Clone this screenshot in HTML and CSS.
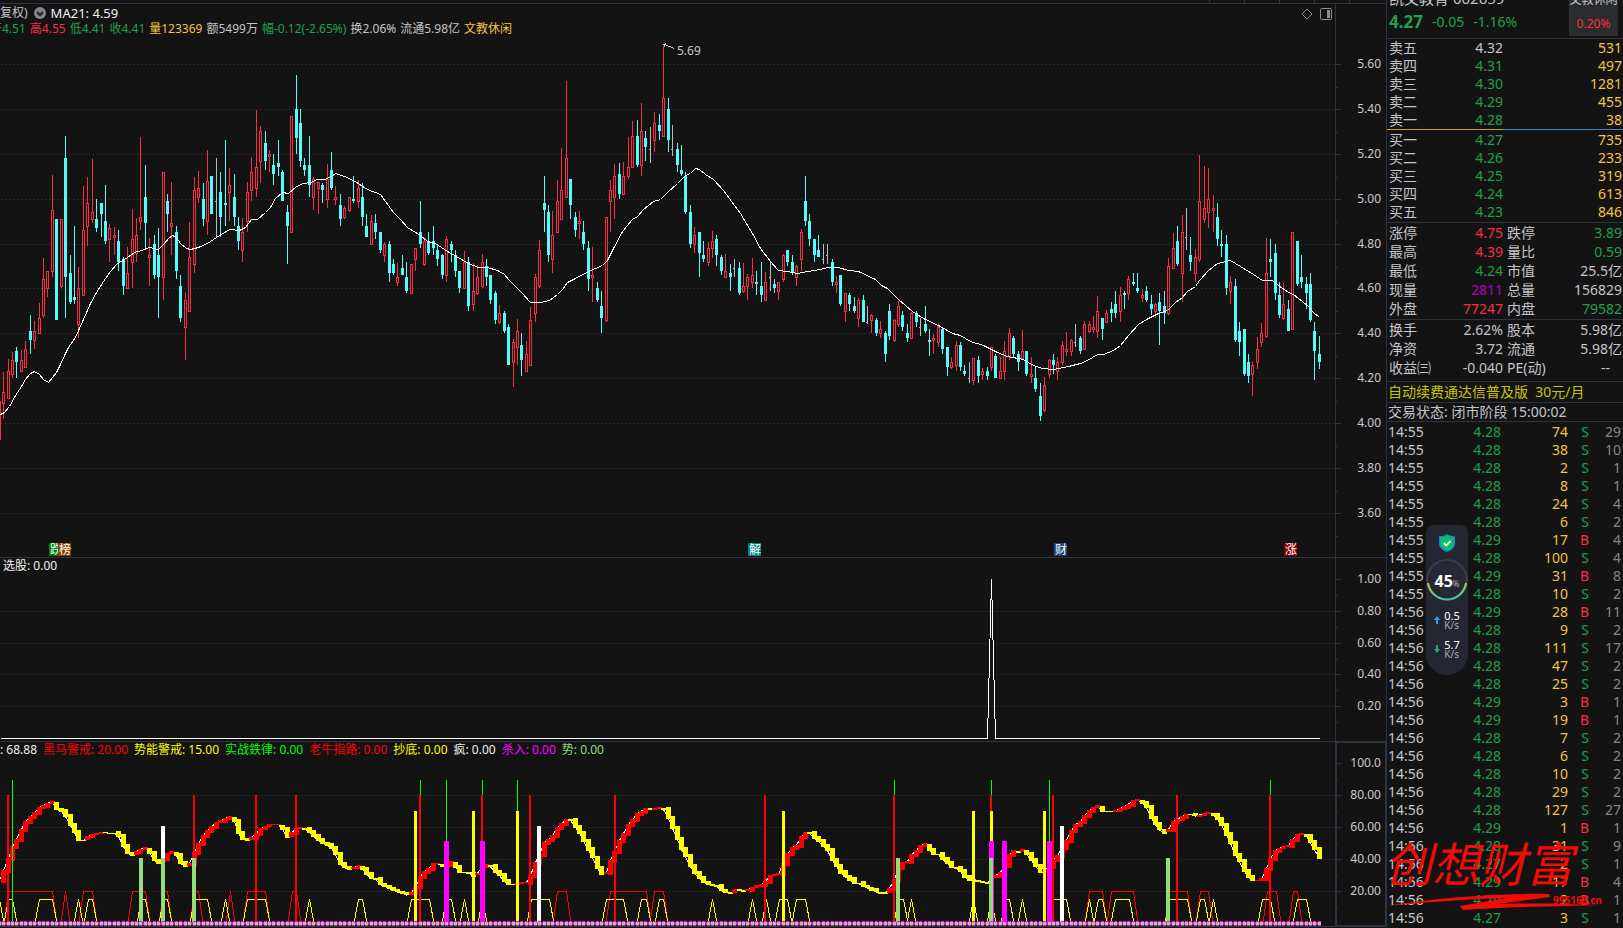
FILE: index.html
```html
<!DOCTYPE html>
<html lang="zh-CN">
<head>
<meta charset="utf-8">
<title>凯文教育 002659</title>
<link rel="stylesheet" href="styles.css">
</head>
<body>
<div class="app">
  <main class="charts">
    <div class="strip"><i></i><i></i><i></i><i></i><i></i></div>

    <section class="panel panel-price">
      <div class="plot">
        <svg class="canvas" id="price"></svg>
        <div class="legend legend-top">
          <span class="adjust">复权)</span>
          <button class="round" type="button" aria-label="指标菜单"><svg viewBox="0 0 12 12"><circle cx="6" cy="6" r="6"/><path d="M3 5l3 3 3-3"/></svg></button>
          <span class="bright">MA21: 4.59</span>
        </div>
        <div class="legend legend-quote">
          <span class="down">开4.51</span><span class="up">高4.55</span><span class="down">低4.41</span><span class="down">收4.41</span><span class="amber">量123369</span><span>额5499万</span><span class="down">幅-0.12(-2.65%)</span><span>换2.06%</span><span>流通5.98亿</span><span class="amber">文教休闲</span>
        </div>
        <div class="tools">
          <button type="button" aria-label="标记"><svg viewBox="0 0 12 12"><path d="M6 1l5 5-5 5-5-5z"/></svg></button>
          <button type="button" aria-label="侧栏"><svg viewBox="0 0 12 12"><rect x=".5" y=".5" width="11" height="11" rx="1"/><path class="solid" d="M7 2h3v8H7z"/></svg></button>
        </div>
      </div>
      <div class="axis"><svg class="canvas" id="price-axis"></svg></div>
    </section>

    <section class="panel panel-pick">
      <div class="plot">
        <svg class="canvas" id="pick"></svg>
        <div class="legend legend-pick"><span class="bright">选股: 0.00</span></div>
      </div>
      <div class="axis"><svg class="canvas" id="pick-axis"></svg></div>
    </section>

    <section class="panel panel-wave">
      <div class="plot">
        <svg class="canvas" id="wave"></svg>
        <div class="legend legend-wave">
          <span class="bright">: 68.88</span><span class="pure-red">黑马警戒: 20.00</span><span class="pure-yellow">势能警戒: 15.00</span><span class="pure-green">实战鉄律: 0.00</span><span class="pure-red">老牛指路: 0.00</span><span class="pure-yellow">抄底: 0.00</span><span class="bright">疯: 0.00</span><span class="magenta">杀入: 0.00</span><span class="leaf">势: 0.00</span>
        </div>
      </div>
      <div class="axis axis-boxed"><svg class="canvas" id="wave-axis"></svg></div>
    </section>
  </main>

  <aside class="side">
    <header class="quote">
      <div class="quote-main">
        <h1>凯文教育 002659</h1>
        <p class="down"><strong>4.27</strong><span>-0.05</span><span>-1.16%</span></p>
      </div>
      <div class="sector"><span>文教休闲</span><b>0.20%</b></div>
    </header>

    <table class="book asks"><tbody>
      <tr><th>卖五</th><td>4.32</td><td>531</td></tr>
      <tr><th>卖四</th><td class="down">4.31</td><td>497</td></tr>
      <tr><th>卖三</th><td class="down">4.30</td><td>1281</td></tr>
      <tr><th>卖二</th><td class="down">4.29</td><td>455</td></tr>
      <tr><th>卖一</th><td class="down">4.28</td><td>38</td></tr>
    </tbody></table>
    <div class="balance"></div>
    <table class="book bids"><tbody>
      <tr><th>买一</th><td class="down">4.27</td><td>735</td></tr>
      <tr><th>买二</th><td class="down">4.26</td><td>233</td></tr>
      <tr><th>买三</th><td class="down">4.25</td><td>319</td></tr>
      <tr><th>买四</th><td class="down">4.24</td><td>613</td></tr>
      <tr><th>买五</th><td class="down">4.23</td><td>846</td></tr>
    </tbody></table>

    <table class="facts"><tbody>
      <tr><th>涨停</th><td class="up">4.75</td><th>跌停</th><td class="down">3.89</td></tr>
      <tr><th>最高</th><td class="up">4.39</td><th>量比</th><td class="down">0.59</td></tr>
      <tr><th>最低</th><td class="down">4.24</td><th>市值</th><td>25.5亿</td></tr>
      <tr><th>现量</th><td class="violet">2811</td><th>总量</th><td>156829</td></tr>
      <tr><th>外盘</th><td class="up">77247</td><th>内盘</th><td class="down">79582</td></tr>
    </tbody></table>
    <table class="facts facts-more"><tbody>
      <tr><th>换手</th><td>2.62%</td><th>股本</th><td>5.98亿</td></tr>
      <tr><th>净资</th><td>3.72</td><th>流通</th><td>5.98亿</td></tr>
      <tr><th>收益㈢</th><td>-0.040</td><th>PE(动)</th><td class="dash">--</td></tr>
    </tbody></table>
    <a class="renew" href="#">自动续费通达信普及版&nbsp; 30元/月</a>
    <p class="status">交易状态: 闭市阶段 15:00:02</p>
    <table class="ticks"><tbody id="ticks"></tbody></table>

    <div class="monitor">
      <svg class="shield" viewBox="0 0 16 18"><path d="M8 0c2 1.600 5 2.200 8 2.300v7.200c0 4-3.500 7-8 8.500-4.500-1.500-8-4.500-8-8.500V2.300C3 2.200 6 1.600 8 0z" fill="#2a7be0"/><path d="M8 1.500c2 1.200 4.300 1.800 6.600 2v6c0 3.200-2.700 5.600-6.600 7-3.900-1.400-6.600-3.800-6.600-7v-6c2.300-.2 4.600-.8 6.600-2z" fill="#06c25f"/><path d="M4.800 9l2.400 2.400 4.200-4.200" fill="none" stroke="#fff" stroke-width="1.800"/></svg>
      <div class="gauge">
        <svg viewBox="0 0 42 42"><defs><linearGradient id="arc" x1="0" y1="0" x2="0" y2="1"><stop offset="0" stop-color="#b6cf3c"/><stop offset="1" stop-color="#35c9b4"/></linearGradient></defs><circle cx="21" cy="21" r="20" fill="#262933" stroke="#3a3d48" stroke-width="2"/><path d="M2 24a19.200 19.200 0 0 0 38 0" fill="none" stroke="url(#arc)" stroke-width="2"/></svg>
        <span><b>45</b>%</span>
      </div>
      <div class="rate"><svg viewBox="0 0 6 8"><path d="M3 0l3 4H4v4H2V4H0z" fill="#1ba4ff"/></svg><span>0.5<small>K/s</small></span></div>
      <div class="rate"><svg viewBox="0 0 6 8"><path d="M3 8L0 4h2V0h2v4h2z" fill="#12b565"/></svg><span>5.7<small>K/s</small></span></div>
    </div>

    <div class="brand">
      <span class="brand-name">创想财富</span>
      <svg viewBox="0 0 220 20"><path d="M0 14C50 6 110 1 164 2L165 5 112 12C145 11 180 12 218 13 180 14 120 15 78 18L75 14 122 6C80 7 35 11 0 14z"/></svg>
      <span class="brand-site">995168.cn</span>
    </div>
  </aside>
</div>
<script src="chart.js"></script>
</body>
</html>
```
FILE: styles.css
```css
:root {
  --bg: #141314;
  --line: #2f323f;
  --text: #c3c5ca;
  --up: #fa2d45;
  --down: #1fa04c;
  --amber: #f5c244;
}
* { box-sizing: border-box; }
body {
  margin: 0;
  background: var(--bg);
  color: var(--text);
  font: 14px/18px "Noto Sans", "Noto Sans CJK SC", sans-serif;
  overflow: hidden;
}
button { padding: 0; border: 0; background: none; display: block; }
.app { display: grid; grid-template-columns: minmax(0, 1fr) 237px; height: 100vh; }
.up { color: var(--up); }
.down { color: var(--down); }
.amber { color: var(--amber); }
.bright { color: #f0f0f0; }
.violet { color: #b400bc; }
.pure-red { color: #f00; }
.pure-yellow { color: #ff0; }
.pure-green { color: #0f0; }
.magenta { color: #f0f; }
.leaf { color: #92de72; }

/* charts */
.charts { display: grid; grid-template-rows: 4px 554fr 184fr 186fr; min-width: 0; }
.strip { border-bottom: 1px solid var(--line); display: flex; justify-content: flex-end; gap: 34px; padding-right: 36px; }
.strip i { width: 1px; background: var(--line); }
.panel { display: grid; grid-template-columns: minmax(0, 1fr) 51px; border-bottom: 1px solid var(--line); min-height: 0; }
.panel-wave { margin-bottom: 1px; }
.plot { position: relative; overflow: hidden; }
.axis { position: relative; border-left: 1px solid var(--line); }
.axis-boxed { box-shadow: inset 0 0 0 1px var(--line); }
.canvas { position: absolute; inset: 0; width: 100%; height: 100%; display: block; font-size: 12px; shape-rendering: crispEdges; }
.legend { position: relative; display: flex; align-items: center; gap: 4px; height: 16px; font-size: 12px; line-height: 16px; white-space: nowrap; }
.legend-top { margin-top: 1px; gap: 5px; }
.legend-top .bright { font-size: 13px; }
.adjust { margin-right: 1px; }
.round svg { width: 12px; height: 12px; display: block; fill: #85868a; }
.round path { fill: none; stroke: #202020; stroke-width: 2; }
.legend-quote { margin-left: -10px; }
.legend-pick { margin: 0 3px; }
.legend-wave { gap: 6px; }
.tools { position: absolute; top: 4px; right: 3px; display: flex; gap: 7px; }
.tools svg { width: 12px; height: 12px; display: block; fill: none; stroke: #8a8b8e; }
.tools .solid { fill: #8a8b8e; stroke: none; }

/* side column */
.side { position: relative; border-left: 1px solid var(--line); overflow: hidden; }
.quote { display: flex; justify-content: space-between; height: 39px; padding: 0 5px 0 2px; border-bottom: 1px solid var(--line); }
.quote h1 { margin: -12px 0 0; font-size: 15px; line-height: 20px; font-weight: 400; white-space: nowrap; }
.quote p { display: flex; align-items: center; gap: 9px; margin: 4px 0 0; line-height: 20px; }
.quote strong { font-size: 17px; }
.sector { width: 49px; height: 36px; background: #2a2c2e; text-align: center; font-size: 12px; line-height: 16px; }
.sector span { display: block; margin-top: -8px; }
.sector b { display: block; margin-top: 8px; color: var(--up); font-weight: 400; }
table { border-collapse: collapse; table-layout: fixed; width: 100%; }
th, td { padding: 0; font-weight: 400; white-space: nowrap; }
th { text-align: left; }
td { text-align: right; }
.book tr { height: 18px; }
.book th { width: 48px; padding-left: 2px; }
.book td:nth-child(2) { width: 68px; }
.book td:last-child { color: var(--amber); padding-right: 1px; }
.balance { height: 1px; background: linear-gradient(90deg, #cf9a35 49%, #4283b8 49%); }
.bids { margin-top: 1px; }
.facts { border-top: 1px solid var(--line); }
.bids + .facts { margin-top: 1px; }
.facts tr { height: 19px; }
.facts th, .facts td { padding-top: 1px; }
.facts th { width: 48px; padding-left: 2px; }
.facts td:nth-child(2) { width: 68px; }
.facts th:nth-child(3) { padding-left: 4px; }
.facts td:last-child { padding-right: 1px; }
.facts td.dash { padding-right: 13px; }
.facts-more { margin-top: 1px; }
.renew { display: block; margin-top: 4px; padding-left: 1px; height: 21px; border-top: 1px solid var(--line); color: #c8c400; line-height: 20px; text-decoration: none; white-space: nowrap; }
.status { margin: 0; height: 20px; padding-left: 1px; border-top: 1px solid var(--line); border-bottom: 1px solid var(--line); white-space: nowrap; }
.ticks { margin-top: 1px; }
.ticks tr { height: 18px; }
.ticks td:nth-child(1) { width: 48px; padding-left: 1px; text-align: left; }
.ticks td:nth-child(2) { width: 66px; }
.ticks td:nth-child(3) { width: 67px; color: var(--amber); }
.ticks td:nth-child(4) { width: 26px; padding-right: 5px; }
.ticks td:nth-child(5) { color: #85868a; padding-right: 2px; }

/* floating monitor */
.monitor { position: absolute; left: 39px; top: 525px; width: 42px; height: 150px; padding-top: 9px; border-radius: 8px 8px 21px 21px; background: #242731; color: #fff; display: flex; flex-direction: column; align-items: center; }
.shield { width: 16px; height: 18px; }
.gauge { position: relative; width: 42px; height: 42px; margin-top: 7px; flex: none; }
.gauge svg { display: block; }
.gauge span { position: absolute; inset: 0; text-align: center; font-size: 8px; line-height: 44px; color: #b0b2b8; }
.gauge b { font-size: 16px; color: #fff; }
.rate { display: flex; align-items: center; gap: 4px; height: 20px; margin-top: 9px; font-size: 11px; line-height: 10px; }
.rate svg { width: 6px; height: 8px; }
.rate small { display: block; font-size: 10px; line-height: 9px; color: #a9abb2; }

/* overlaid brand mark */
.brand { position: absolute; left: -2px; top: 832px; width: 220px; color: #f50a05; }
.brand-name { display: block; font: italic 400 47px/60px "Noto Sans CJK SC", sans-serif; white-space: nowrap; }
.brand svg { display: block; width: 220px; height: 20px; fill: #f50a05; }
.brand-site { position: absolute; left: 168px; top: 62px; font: bold 10px/12px "Noto Sans", sans-serif; }
```
FILE: chart.js
```js
const NS = 'http://www.w3.org/2000/svg';
const STEP = 4.43;
const FIRST = 3.65;
const BASE_WIDTH = 1335;

const UP = '#fa2d45';
const DOWN = '#54fcfc';
const FLAT = '#b9bac8';
const BG = '#141314';

// Bars are kind + high, body top, body bottom, low (flat bars: high, close, low), in thirds of a unit.
const segments = [
  { shift: 750, bars: 'r366,426,462,507 r327,363,447,447 r306,330,375,384 c291,303,336,384 r300,330,366,366 r273,297,354,354 c195,243,270,312 r213,243,273,297 r159,204,252,252 r24,87,198,204 r63,63,117,141' },
  { shift: 0, bars: 'r525,630,815,830 c657,657,959,959 r657,657,861,865 c408,474,831,954 c765,819,906,912 c678,891,900,912 r801,864,974,1014 r558,690,887,887 r531,609,681,738 r477,636,660,669 c597,657,684,696 c609,609,642,711 c555,663,723,732 r672,684,720,786 r681,705,714,765 c690,723,786,813 c771,777,858,885 r741,819,867,867 r627,717,789,864 r654,705,762,786 r411,651,666,690 c495,591,669,747 r714,765,774,858 c705,732,825,837 c684,765,831,954 r516,516,834,900 c582,603,642,696 r546,669,681,765 c678,696,813,837 c825,858,954,966 r876,900,984,1080 r666,771,936,936 r531,570,795,819 r513,564,594,609 c549,597,657,678 r450,543,666,705 c528,528,642,642 g474,604,711 c516,576,651,711 c420,609,615,678 r504,555,579,663 c522,591,651,678 c651,678,723,750 r654,696,753,786 r546,576,666,696 r471,516,573,603 r330,501,567,591 r378,393,486,549 c393,429,483,510 r450,462,471,516 c462,495,522,555 c420,489,501,528 c510,516,603,603 c615,636,678,792 r348,348,699,699 c225,327,414,462 c327,369,483,501 c474,495,510,528 c408,495,555,591 r531,537,594,630 r546,546,567,642 c549,555,570,609 r492,537,600,624 c456,510,564,570 r558,591,600,615 c582,615,657,678 r618,624,654,657 r591,591,633,636 c528,597,603,609 r540,564,606,624 c549,591,651,678 c642,678,711,711 r645,663,735,735 c642,669,696,717 c696,696,750,759 r726,732,768,786 c723,732,819,846 c777,792,819,825 r789,831,849,858 c765,804,825,825 c786,831,873,879 r792,792,882,882 r744,744,780,813 c603,696,732,744' },
  { shift: 90, bars: 'r630,633,705,708 c606,633,669,675 c588,633,654,675 c642,660,687,708 c672,675,735,747 r618,627,738,756 c633,642,660,696 c660,675,723,741 c723,723,774,789 r663,696,777,777 c681,696,828,843 r699,783,825,843 r705,741,792,795 r672,696,771,774 c687,708,741,768 c735,735,810,822 c783,789,870,882 r825,849,879,882 c843,849,903,909 c882,891,1005,1005 r927,936,999,1071 r867,903,954,1005 c909,945,990,1038 r933,972,1026,1026 r831,870,1008,1008 r732,741,852,876 r630,660,771,774 c438,519,540,606 c525,546,675,696 r543,615,690,729 r450,513,609,609 r354,480,570,570 r153,384,504,504 c447,447,525,567 c546,561,600,621 r543,573,582,627 c573,606,642,660 c633,654,747,783 r651,735,744,816 c756,774,810,816 c783,828,864,909 r561,561,873,876 r450,480,516,606 r402,438,504,567 c399,432,492,507 r396,438,495,495 r321,411,441,447 r273,318,414,414 c270,318,405,411 r219,303,408,438 c303,324,351,393 g291,358,399 r246,279,333,366 c252,285,303,330 r48,204,321,321 c204,237,330,366 g285,358,378 c339,357,405,426 c345,420,432,438 c426,438,546,552 c525,546,642,654 r591,615,645,669 c606,606,669,741 c633,675,687,696 r636,654,699,708 r603,633,657,684 c615,627,675,708 c675,681,723,735 r672,723,744,744 c702,729,741,783 g687,715,741 c696,714,789,795 r699,768,786,789 r732,741,771,810 r684,735,759,774 c723,756,762,795 c696,768,795,816 r726,756,813,813 g696,741,783 c747,762,774,789 r756,756,786,810 r672,675,750,756 c660,660,696,708' },
  { shift: 510, bars: 'c255,276,309,315 r285,288,324,348 r177,186,270,303 c18,93,153,168 c132,153,207,228 c207,207,255,276 c195,240,261,261 g222,268,282 g222,256,282 c267,276,336,348 r318,336,345,369 c315,315,402,408 r369,369,426,456 c369,375,402,423 c381,408,423,429 r384,390,447,471 c375,390,456,456 g408,457,462 r432,435,453,489 c444,450,489,498 r453,477,492,504 c483,489,552,576 c402,423,498,510 r447,450,513,516 r393,408,465,471 c423,435,471,483 c462,489,504,516 r426,429,507,507 c423,429,456,471 g444,472,498 c408,462,483,489 c477,510,516,558 r492,504,513,552 r459,471,519,531 c471,477,537,552 c531,531,591,618 r561,576,594,597 r513,525,588,603 c516,525,591,603 c585,603,612,618 g576,625,639 r564,564,633,645 c558,570,618,639 r594,603,615,630 c591,603,618,630 r531,531,594,603 c552,558,624,624 r561,603,627,627 r513,543,606,630 r474,489,561,570 c498,504,552,564 c543,552,576,603 r480,543,567,570 c543,543,612,618 r561,612,621,639 c591,624,657,666 c639,678,738,753 r621,645,723,726 r567,570,615,624 c552,570,585,612 r561,576,606,630 r513,525,579,585 r486,537,546,558 r507,510,546,558 g462,517,531 c498,504,543,552 r453,462,540,540 r453,462,486,489 r438,471,480,489 r378,423,486,504 c444,444,477,510 r420,429,459,459 c396,417,429,456 c363,402,429,444 r351,375,426,456 c363,369,375,417 r318,327,372,390' },
  { shift: 420, bars: 'c399,426,432,438 c399,444,453,459 r447,465,474,486 c438,453,480,486 c465,492,507,525 r489,492,516,534 c459,486,513,615 c453,498,519,552 r354,378,522,525 r279,324,387,387 c258,303,372,378 r225,276,402,486 g204,292,330 c291,345,366,393 r327,351,402,426 r45,183,360,366 r78,204,240,249 r84,177,219,264 r165,204,213,276 c189,231,297,318 c270,312,318,351 c285,312,444,465 r408,426,456,492 c417,438,600,606 c546,573,606,648 c567,567,702,708 c642,666,708,729 r663,675,705,768 r591,627,669,687 r549,579,609,621 r294,399,591,594 c297,357,366,411 c312,339,459,480 c426,465,525,534 r429,492,537,540 c480,507,573,573 r276,276,570,570 c303,303,432,438 c345,411,426,444 c411,432,459,507 c399,432,540,546 c546,573,633,720 c588,642,666,687' }
];

const average = '0,414 4,412 9,406 15,395 21,386 25,379 30,373 34,371 39,374 43,379 48,382 52,377 56,372 60,364 65,353 68,347 75,337 83,319 90,303 96,292 103,281 110,271 116,264 119,262 127,257 134,252 141,250 149,247 158,249 164,243 168,238 172,235 176,237 180,243 186,248 190,249 198,247 207,243 216,237 229,229 239,230 245,227 251,219 257,219 265,212 270,207 275,198 282,192 288,193 296,186 303,183 310,182 317,179 324,179 331,176 335,173 344,176 353,180 367,189 380,194 393,212 400,219 407,227 420,235 427,241 435,243 447,251 463,260 468,263 478,267 487,267 497,270 504,274 508,279 513,284 522,293 530,302 540,302 549,300 557,294 562,289 567,282 573,279 588,271 602,265 607,260 613,248 622,231 632,219 637,216 643,209 653,201 660,199 667,192 677,183 685,175 690,173 695,168 699,169 705,174 713,179 723,190 740,213 752,233 760,248 770,261 778,270 787,271 797,273 813,270 820,269 827,267 838,267 848,270 858,271 875,279 881,285 887,288 898,299 912,311 923,318 940,326 952,333 960,335 970,341 983,345 997,352 1007,356 1023,359 1033,365 1042,368 1053,369 1068,366 1080,363 1087,360 1097,354 1103,354 1113,350 1120,345 1128,335 1138,324 1148,318 1158,313 1167,310 1175,302 1182,297 1187,291 1195,286 1199,280 1208,270 1217,263 1230,260 1240,266 1253,274 1262,280 1272,280 1278,285 1288,292 1293,294 1307,305 1313,312 1319,317';

const wave = '-1,880 3,870 8,858 12,846 17,837 21,829 25,821 30,816 34,812 39,807 43,805 48,802 52,801 56,809 61,811 65,816 70,825 74,832 78,840 83,840 87,836 92,834 101,832 114,833 118,836 123,846 127,853 132,855 136,851 141,848 145,847 150,854 154,860 159,863 163,858 167,853 172,851 176,855 180,863 185,866 190,862 194,852 199,841 203,835 208,829 212,825 216,822 221,820 225,818 229,816 234,821 238,833 243,840 247,840 252,836 256,833 260,828 265,826 270,824 278,824 282,829 287,837 292,831 296,828 300,827 305,829 309,832 314,837 318,840 322,843 327,845 331,848 336,856 340,864 345,868 349,869 358,865 362,869 367,875 371,878 375,879 380,884 384,886 389,888 393,890 398,892 402,893 407,895 411,892 416,885 420,876 424,871 429,867 433,863 438,863 442,866 451,861 455,867 460,873 465,872 469,873 473,875 478,872 482,866 486,864 491,867 495,872 500,876 504,881 509,885 514,884 520,882 527,882 530,875 535,862 540,852 544,842 549,838 553,834 557,827 562,822 566,819 571,820 575,827 580,834 584,843 589,851 593,860 597,868 601,874 606,872 610,860 615,849 619,840 624,831 628,824 633,818 637,813 642,810 646,807 650,809 659,807 663,809 668,818 672,828 677,839 681,849 686,858 690,866 694,873 699,878 703,882 708,884 716,886 721,890 725,892 730,893 734,889 743,891 748,889 752,887 757,885 761,884 766,880 770,875 775,874 779,873 783,863 788,851 792,847 797,844 801,836 805,832 810,833 814,838 819,842 823,846 828,851 832,860 837,867 841,874 846,877 850,880 854,883 859,883 863,886 868,888 872,890 877,892 883,893 886,893 890,886 894,879 898,867 902,862 907,861 911,854 916,850 920,845 925,843 929,850 934,855 938,854 942,859 947,863 951,867 956,868 960,871 965,878 970,880 977,881 988,883 992,874 996,875 1000,872 1005,863 1009,854 1013,850 1018,852 1022,849 1027,855 1031,860 1036,867 1040,872 1045,868 1049,866 1053,859 1058,854 1062,847 1067,838 1071,830 1075,824 1080,821 1084,815 1089,810 1093,807 1098,805 1102,811 1111,811 1116,810 1120,808 1124,806 1129,803 1133,800 1137,799 1142,803 1147,808 1151,818 1156,826 1160,831 1164,832 1169,828 1173,821 1178,818 1182,816 1187,813 1196,816 1200,814 1208,812 1213,815 1218,820 1222,826 1227,836 1231,845 1235,855 1240,863 1244,871 1248,877 1253,881 1257,880 1262,878 1266,868 1271,856 1275,850 1280,847 1284,846 1289,845 1293,837 1297,834 1302,833 1306,836 1311,844 1315,851 1319,858';

// Flat stretches of the two alert levels: from-to.
const redAlert = '8-52 65-65 83-92 132-145 163-167 194-198 230-230 247-265 292-296 557-566 610-646 654-663 1089-1102 1111-1133 1169-1187 1200-1208 1267-1276 1293-1297';
const yellowAlert = '-3--1 8-12 39-52 78-78 88-92 141-145 163-167 194-207 225-225 247-265 309-309 358-362 411-429 446-451 464-464 482-482 531-549 606-623 641-646 659-663 712-712 752-752 766-766 779-787 796-805 898-903 911-911 973-973 991-991 1005-1009 1022-1022 1053-1066 1089-1089 1098-1102 1115-1129 1169-1187 1200-1204 1213-1213 1262-1270 1297-1306';

const signals = [
  { color: '#0f0', width: 1, top: 38, at: [12, 420, 446, 482, 517, 894, 991, 1049, 1270] },
  { color: '#f00', width: 2, top: 53, at: [7, 193, 255, 295, 419, 481, 529, 614, 764, 893, 990, 1052, 1176, 1269] },
  { color: '#ff0', width: 3, top: 69, at: [414, 472, 516, 782, 972, 990, 1043] },
  { color: '#f0f', width: 5, top: 99, at: [444, 480, 989, 1002, 1047] },
  { color: '#fff', width: 4, top: 84, at: [161, 537, 1060] },
  { color: '#92de72', width: 4, top: 116, at: [139, 161, 192, 896, 989, 1166] }
];

const trades = '14:55,4.28,74,S,29 14:55,4.28,38,S,10 14:55,4.28,2,S,1 14:55,4.28,8,S,1 14:55,4.28,24,S,4 14:55,4.28,6,S,2 14:55,4.29,17,B,4 14:55,4.28,100,S,4 14:55,4.29,31,B,8 14:55,4.28,10,S,2 14:56,4.29,28,B,11 14:56,4.28,9,S,2 14:56,4.28,111,S,17 14:56,4.28,47,S,2 14:56,4.28,25,S,2 14:56,4.29,3,B,1 14:56,4.29,19,B,1 14:56,4.28,7,S,2 14:56,4.28,6,S,2 14:56,4.28,10,S,2 14:56,4.28,29,S,2 14:56,4.28,127,S,27 14:56,4.29,1,B,1 14:56,4.28,31,S,9 14:56,4.27,2,S,1 14:56,4.29,17,B,4 14:56,4.29,2,B,1 14:56,4.27,3,S,1';

function points(text) {
  return text.split(' ').map(p => p.split(',').map(Number));
}

function begin(id, baseHeight) {
  const svg = document.getElementById(id);
  svg.replaceChildren();
  const { width, height } = svg.getBoundingClientRect();
  const sx = width / BASE_WIDTH;
  const sy = height / baseHeight;
  const add = (tag, attrs, text) => {
    const node = document.createElementNS(NS, tag);
    for (const key in attrs) node.setAttribute(key, attrs[key]);
    if (text) node.textContent = text;
    svg.append(node);
    return node;
  };
  return {
    add, width, sx, sy,
    rect: (x, y, w, h, fill) => add('rect', { x: Math.floor(x * sx), y: Math.round(y * sy), width: w, height: Math.max(1, Math.round(h * sy)), fill }),
    line: (pts, stroke) => add('polyline', { points: pts.map(([x, y]) => (x * sx + 0.5) + ',' + (y * sy + 0.5)).join(' '), fill: 'none', stroke }),
    grid: rows => rows.forEach(y => add('path', { d: `M1 ${Math.round(y * sy) + 0.5}H${width}`, stroke: '#3a3a42', 'stroke-dasharray': '1 3' }))
  };
}

function xOf(i) {
  return Math.floor(FIRST + STEP * i);
}

function drawPrice() {
  const c = begin('price', 553);
  c.grid([60, 105, 150, 195, 240, 284, 329, 374, 419, 464, 509]);
  c.rect(0, 397, 1, 39, UP);
  let i = 0;
  for (const { shift, bars } of segments) {
    for (const bar of bars.split(' ')) {
      const x = xOf(i++);
      const v = bar.slice(1).split(',').map(n => Math.round((Number(n) + shift) / 3) - 4);
      if (bar[0] === 'g') {
        c.rect(x, v[0], 1, v[2] - v[0], FLAT);
        c.rect(x - 1, v[1], 1, 1, FLAT);
        continue;
      }
      const color = bar[0] === 'r' ? UP : DOWN;
      c.rect(x, v[0], 1, v[3] - v[0], color);
      c.rect(x - 1, v[1], 3, v[2] - v[1], color);
      if (color === UP && v[2] - v[1] > 2) c.rect(x, v[1] + 1, 1, v[2] - v[1] - 2, BG);
    }
  }
  c.line(points(average).map(([x, y]) => [x, y - 4]), '#fff');
  c.line([[666, 39], [663, 40], [665, 43]], '#ccc');
  c.line([[664, 40], [674, 44]], '#ccc');
  c.add('text', { x: 677 * c.sx, y: 51 * c.sy, fill: '#c3c5ca' }, '5.69');
  [[49, '跌', '#008000'], [58, '榜', '#8a4400'], [748, '解', '#008080'], [1054, '财', '#1d447c'], [1284, '涨', '#8c0000']].forEach(([x, label, fill]) => {
    c.rect(x, 539, 13, 13, fill);
    c.add('text', { x: Math.floor(x * c.sx) + 1, y: Math.round(539 * c.sy) + 11, fill: '#fff' }, label);
  });
}

function drawPick() {
  const c = begin('pick', 183);
  c.grid([53, 85, 116, 148]);
  c.line([[0, 180], [987, 180], [991, 21], [995, 180], [1319, 180]], '#fff');
}

function alertLine(c, text, top, color) {
  for (const item of text.split(' ')) {
    const [, from, to] = item.match(/^(-?\d+)-(-?\d+)$/).map(Number);
    c.line([[from - STEP, 180], [from, top], [to, top], [to + STEP, 180]], color);
  }
}

function drawWave() {
  const c = begin('wave', 184);
  c.grid([53, 85, 117, 149]);
  alertLine(c, redAlert, 149, '#f00');
  alertLine(c, yellowAlert, 157, '#ff0');
  const keys = points(wave).map(([x, y]) => [x, y - 742]);
  const valueAt = x => {
    let k = 1;
    while (k < keys.length - 1 && keys[k][0] < x) k++;
    const [x0, y0] = keys[k - 1], [x1, y1] = keys[k];
    const t = Math.min(1, (x - x0) / (x1 - x0));
    return y0 + (y1 - y0) * t;
  };
  const values = [];
  for (let i = -1; i <= 297; i++) values.push([xOf(i), valueAt(xOf(i))]);
  c.line(values, '#fff');
  // Consecutive blocks in one direction overlap a little; a block that turns starts at the turn.
  let rising = true;
  for (let i = 1; i < values.length; i++) {
    const [x, now] = values[i];
    const before = values[i - 1][1];
    const size = Math.abs(now - before);
    const up = size < 0.05 ? rising : now < before;
    const overlap = up === rising ? Math.min(3, size) : 0;
    const full = Math.max(size < 0.5 ? 1 : 2, size + overlap);
    if (up) c.rect(x - 2, now, 5, full, '#f00');
    else c.rect(x - 2, now - full + 1, 5, full, '#ff0');
    rising = up;
  }
  for (const { color, width, top, at } of signals) {
    at.forEach(x => c.rect(x, top, width, 180 - top, color));
  }
  c.rect(0, 180, Math.floor(1321 * c.sx), 3, '#f0f');
  for (let i = -1; i <= 297; i++) {
    c.rect(xOf(i) - 1, 179, 3, 5, '#f0f');
    c.rect(xOf(i) - 1, 180, 3, 3, '#92de72');
  }
}

function drawAxis(id, baseHeight, rows, labels, half) {
  const c = begin(id, baseHeight);
  rows.forEach((y, i) => {
    const top = Math.round(y * c.sy);
    c.add('path', { d: `M0 ${top + 0.5}h5`, stroke: '#2f323f' });
    c.add('path', { d: `M0 ${Math.round((y + half) * c.sy) + 0.5}h2`, stroke: '#2f323f' });
    c.add('text', { x: c.width - 5, y: top + 4, fill: '#c8cacf', 'text-anchor': 'end' }, labels[i]);
  });
}

function draw() {
  drawPrice();
  drawPick();
  drawWave();
  drawAxis('price-axis', 553, [60, 105, 150, 195, 240, 284, 329, 374, 419, 464, 509], ['5.60', '5.40', '5.20', '5.00', '4.80', '4.60', '4.40', '4.20', '4.00', '3.80', '3.60'], 23);
  drawAxis('pick-axis', 183, [21, 53, 85, 116, 148], ['1.00', '0.80', '0.60', '0.40', '0.20'], 16);
  drawAxis('wave-axis', 184, [21, 53, 85, 117, 149], ['100.0', '80.00', '60.00', '40.00', '20.00'], 16);
}

document.getElementById('ticks').innerHTML = trades.split(' ').map(row => {
  const [time, price, volume, side, count] = row.split(',');
  return `<tr><td>${time}</td><td class="down">${price}</td><td>${volume}</td><td class="${side === 'B' ? 'up' : 'down'}">${side}</td><td>${count}</td></tr>`;
}).join('');

draw();
addEventListener('resize', draw);
```
